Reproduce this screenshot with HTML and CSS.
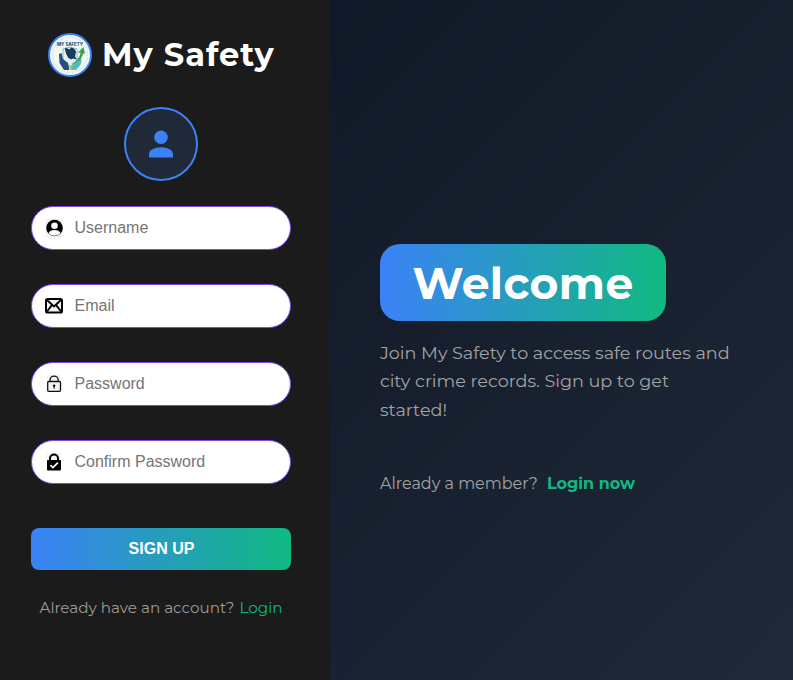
FILE: index.html
```
<!DOCTYPE html>
<html lang="en">
<head>
<meta charset="utf-8">
<title>My Safety - Sign Up</title>
<link rel="stylesheet" href="styles.css">
</head>
<body>
<main class="page">
  <section class="panel">
    <header class="brand">
      <svg class="logo" viewBox="0 0 44 44" aria-hidden="true">
        <circle cx="22" cy="22" r="21" fill="#f3f7f4" stroke="#3b82f6" stroke-width="2"/>
        <circle cx="22" cy="22" r="17.500" fill="none" stroke="#cfe2dc" stroke-width="1.500" stroke-dasharray="1 1.200"/>
        <path d="M15 16l7-2 7 2v8c0 5-3 8-7 10-4-2-7-5-7-10z" fill="#e6f0ee" stroke="#74aaba" stroke-width=".8"/>
        <path d="M17.500 14.500l4 2 1.500-2 3 1 2 3-1 5 2 3-4-1-2 1-3-2-2-4-1-4z" fill="#173b5d"/>
        <path d="M11 21l2.500-1 1.500 6 5 4 1.500 7h-5.500l-4.500-7z" fill="#224f7f"/>
        <path d="M33 23l-2.500 1-1.500 3-5 4-1.500 6h5.500l4.500-5 1-4z" fill="#55b9c4"/>
        <path d="M22 31c7-2 10-6 10.500-11.500l-3 .5 6-6 1.500 7-2-.5c-1 6-6 9.500-13 10.500z" fill="#35a34a"/>
        <path d="M20 31l3 2 3-2-3 6z" fill="#9acb4c"/>
        <text x="22" y="12.800" text-anchor="middle" textLength="26" lengthAdjust="spacingAndGlyphs" class="logo-text">MY SAFETY</text>
      </svg>
      <h1 class="brand-name"><span>My</span> <span>Safety</span></h1>
    </header>
    <div class="avatar">
      <svg viewBox="0 0 32 32" width="32" height="32" fill="#3b82f6" aria-hidden="true"><circle cx="16" cy="9.300" r="6.800"/><path d="M4 29.500v-3.200c0-4.100 5-7.100 12-7.100s12 3 12 7.100v3.200z"/></svg>
    </div>
    <form class="form">
      <label class="field">
        <svg class="icon" viewBox="0 0 18 18" aria-hidden="true"><path fill="#f4f4f4" d="M1 0h17v18H1z"/><circle cx="9.500" cy="9" r="8.300"/><circle cx="9.500" cy="6.800" r="3.300" fill="#fff"/><path d="M3.500 14c1-2.200 3-3.100 6-3.100s5 .9 6 3.100c-1.600 1.800-3.500 2.700-6 2.700S5.100 15.800 3.500 14z" fill="#fff"/></svg>
        <input type="text" placeholder="Username">
      </label>
      <label class="field">
        <svg class="icon" viewBox="0 0 18 18" aria-hidden="true"><rect x="1" y="2" width="16" height="13.500" rx="1.600" fill="#f4f4f4" stroke="#000" stroke-width="2"/><path d="M2 3l7 6.500L16 3M2 14.500l5-6.600M16 14.500l-5-6.600" fill="none" stroke="#000" stroke-width="1.900"/></svg>
        <input type="email" placeholder="Email">
      </label>
      <label class="field">
        <svg class="icon" viewBox="0 0 18 18" aria-hidden="true"><path fill="#f4f4f4" d="M2 0h14v17H2z"/><rect x="2.700" y="6.500" width="12.800" height="9.800" rx="1" fill="none" stroke="#111" stroke-width="1.300"/><path d="M5 6.500V5.200a4.100 4.100 0 0 1 8.200 0v1.300" fill="none" stroke="#111" stroke-width="1.300"/><circle cx="9.100" cy="10.600" r="1.200"/><path d="M8.600 11h1v2.700h-1z"/></svg>
        <input type="password" placeholder="Password">
      </label>
      <label class="field">
        <svg class="icon" viewBox="0 0 18 18" aria-hidden="true"><path fill="#f4f4f4" d="M2 0h14v17H2z"/><rect x="2" y="7" width="14" height="10.500" rx=".7"/><path d="M5 8V5.500a4 4 0 0 1 8 0V8" fill="none" stroke="#000" stroke-width="2"/><path d="M5.400 12.200l2.500 2.400 5-5" fill="none" stroke="#fff" stroke-width="1.600"/></svg>
        <input type="password" placeholder="Confirm Password">
      </label>
      <button class="submit" type="button">SIGN UP</button>
    </form>
    <p class="account"><span>Already have an account?</span> <a href="#">Login</a></p>
  </section>
  <section class="welcome">
    <h2 class="banner"><span>Welcome</span></h2>
    <p class="intro">Join My Safety to access safe routes and<br>city crime records. Sign up to get<br>started!</p>
    <p class="member"><span>Already a member?</span> <a href="#">Login now</a></p>
  </section>
</main>
</body>
</html>
```
FILE: styles.css
```
* { box-sizing: border-box; }
body { margin: 0; font-family: Montserrat, Inter, sans-serif; }
h1, h2, p { margin: 0; white-space: nowrap; }
a { text-decoration: none; color: #10b981; }
.page { display: flex; height: 680px; overflow: hidden; }
.panel { width: 330px; flex: none; padding: 33px 39px 0 31px; background: #1b1b1b; }
.brand { display: flex; align-items: center; gap: 10px; height: 44px; padding-left: 17px; }
.logo { width: 44px; height: 44px; flex: none; }
.logo-text { font: bold 4.300px Inter, sans-serif; fill: #173b5d; }
.brand-name { font-size: 32px; line-height: 44px; font-weight: 700; color: #fff; letter-spacing: 1px; }
.avatar { display: flex; align-items: center; justify-content: center; width: 74px; height: 74px; margin: 30px auto 25px; border: 2px solid #3b82f6; border-radius: 50%; background: #1f2937; }
.form { display: flex; flex-direction: column; gap: 34px; }
.field { display: flex; align-items: center; gap: 11.500px; height: 44px; padding: 0 13px; border: 1px solid #7c45f5; border-radius: 22px; background: #fff; }
.icon { width: 18px; height: 18px; flex: none; }
.field input { flex: 1; min-width: 0; height: 40px; padding: 0; border: 0; outline: 0; background: transparent; font: 16px "Liberation Sans", Arial, sans-serif; }
.field input::placeholder { color: #757575; }
.submit { height: 42px; margin-top: 10px; padding: 0 0 0 1px; border: 0; border-radius: 8px; background: linear-gradient(90deg, #3b82f6, #10b981); color: #fff; font: bold 16px "Liberation Sans", Arial, sans-serif; }
.account { margin-top: 28px; padding-left: 8.500px; font-size: 15.200px; line-height: 20px; color: #9c9c9c; }
.account a { margin-left: 1px; }
.welcome { flex: 1; display: flex; flex-direction: column; align-items: flex-start; padding: 244px 50px 0; background: linear-gradient(135deg, #111827, #1f2937); }
.banner { width: 286px; height: 77px; padding-left: 32.500px; border-radius: 20px; background: linear-gradient(90deg, #3b82f6, #10b981); color: #fff; font-size: 44px; line-height: 78px; font-weight: 700; letter-spacing: .4px; }
.intro { margin-top: 18px; font-size: 17.600px; line-height: 28.400px; color: #a3a3a3; }
.member { margin-top: 48px; font-size: 16px; line-height: 24px; color: #a3a3a3; }
.member a { margin-left: 5px; font-weight: 700; }
```
